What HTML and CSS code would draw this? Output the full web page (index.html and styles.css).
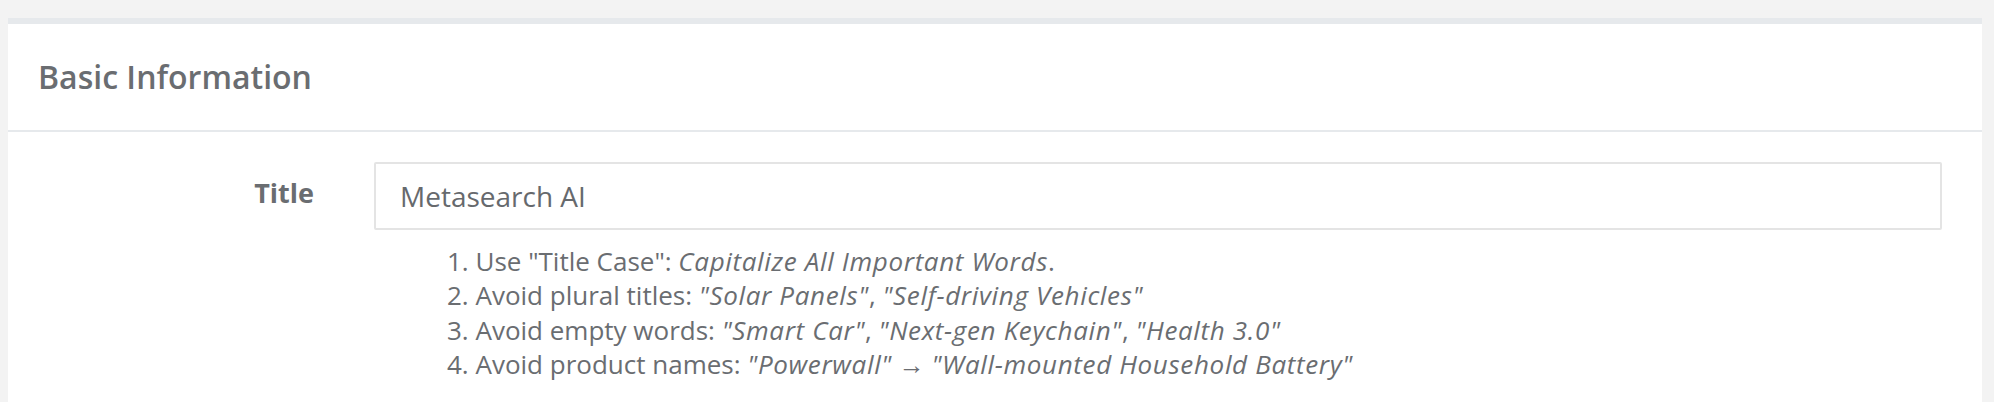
FILE: index.html
```html
<!DOCTYPE html>
<html lang="en">
<head>
<meta charset="utf-8">
<title>Basic Information</title>
<link rel="stylesheet" href="styles.css">
</head>
<body>
<div class="page">
  <section class="card">
    <header class="card-header">
      <h2 class="card-title">Basic Information</h2>
    </header>
    <div class="card-body">
      <div class="form-row">
        <label class="form-label" for="title">Title</label>
        <div class="form-field">
          <input class="form-input" id="title" type="text" value="Metasearch AI">
          <ol class="hints">
            <li>Use "Title Case": <em>Capitalize All Important Words</em>.</li>
            <li>Avoid plural titles: <em>"Solar Panels"</em>, <em>"Self-driving Vehicles"</em></li>
            <li>Avoid empty words: <em>"Smart Car"</em>, <em>"Next-gen Keychain"</em>, <em>"Health 3.0"</em></li>
            <li>Avoid product names: <em>"Powerwall"</em> → <em>"Wall-mounted Household Battery"</em></li>
          </ol>
        </div>
      </div>
    </div>
  </section>
</div>
</body>
</html>
```

FILE: styles.css
```css
* {
  box-sizing: border-box;
}

html, body {
  margin: 0;
  padding: 0;
  background: #f3f3f3;
  font-family: "Open Sans", "Noto Sans", "Liberation Sans", sans-serif;
  color: #6a6d71;
}

.page {
  padding: 18px 12px 0 8px;
}

.card {
  background: #ffffff;
  border-top: 6px solid #e6e9ec;
  min-height: 400px;
}

.card-header {
  height: 108px;
  border-bottom: 2px solid #e6e9ec;
  display: flex;
  align-items: center;
  padding: 0 0 0 30px;
}

.card-title {
  margin: 0;
  font-size: 32px;
  font-weight: 600;
  line-height: 1;
  color: #6a6d71;
}

.card-body {
  padding-top: 30px;
}

.form-row {
  display: flex;
  align-items: flex-start;
}

.form-label {
  width: 336px;
  flex: none;
  text-align: right;
  padding-right: 30px;
  padding-top: 12px;
  font-size: 27px;
  font-weight: 700;
  line-height: 38px;
  color: #6a6d71;
}

.form-field {
  flex: 1;
  margin-left: 30px;
  margin-right: 40px;
}

.form-input {
  display: block;
  width: 100%;
  height: 68px;
  border: 2px solid #e4e4e4;
  border-radius: 2px;
  padding: 0 24px;
  font-family: inherit;
  font-size: 28px;
  color: #66696d;
  background: #fff;
  outline: none;
}

.hints {
  margin: 14px 0 0 73px;
  padding: 0;
  list-style: decimal inside;
  font-size: 26px;
  line-height: 34.3px;
  color: #6a6d71;
}

.hints em {
  font-style: italic;
  letter-spacing: 0.65px;
}
```
